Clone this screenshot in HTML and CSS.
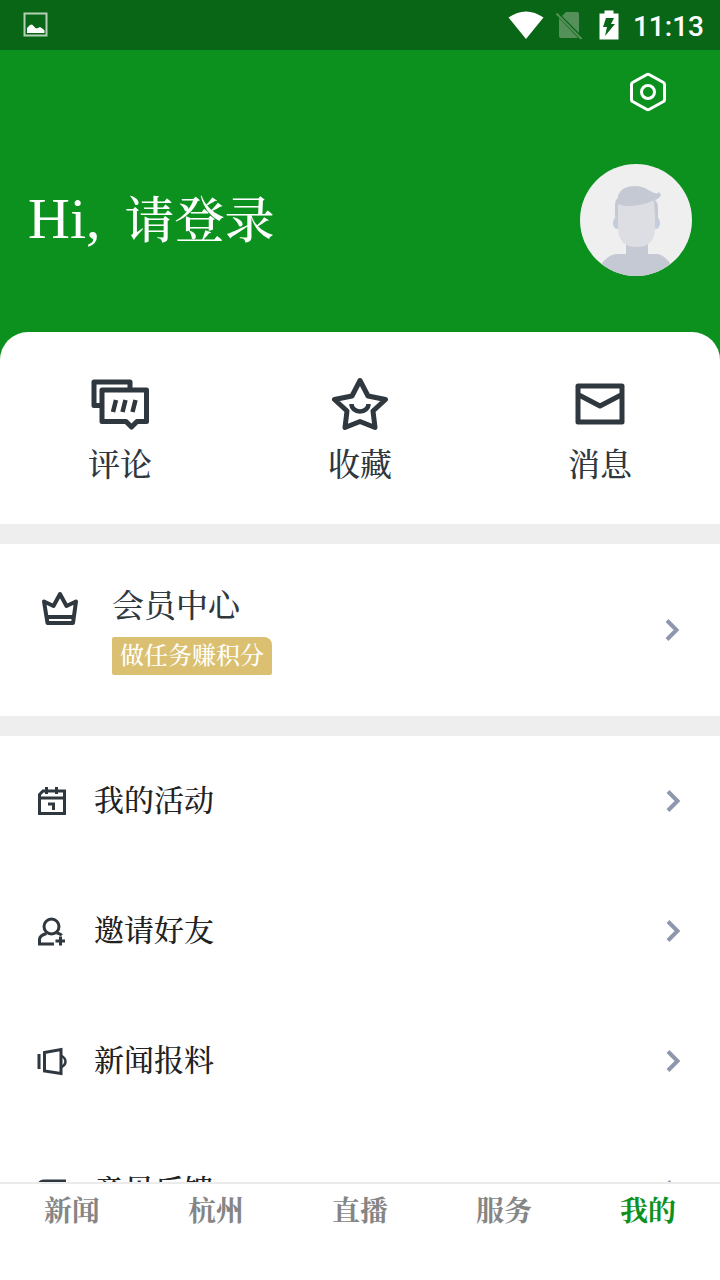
FILE: index.html
```html
<!DOCTYPE html>
<html lang="zh-CN">
<head>
<meta charset="utf-8">
<meta name="viewport" content="width=device-width, initial-scale=1">
<title>我的</title>
<link rel="stylesheet" href="styles.css">
</head>
<body>
<div class="app">
  <div class="status">
    <svg class="status-photo" width="26" height="26" viewBox="0 0 26 26" aria-hidden="true">
      <rect x="1.500" y="1.500" width="22" height="22" fill="none" stroke="#b5d0b6" stroke-width="2"/>
      <path d="M4 21v-5l3-3 2-.5 2 2 2 2 2-.5 2-1 3 2 1.500 1.500V21z" fill="#fff"/>
    </svg>
    <svg width="36" height="30" viewBox="0 0 36 30" aria-hidden="true">
      <path d="M.5 7.500Q18-4.500 35.500 7.500L18 29z" fill="#fff"/>
    </svg>
    <svg class="status-sim" width="28" height="30" viewBox="0 0 28 30" aria-hidden="true">
      <path d="M11 2h11q2 0 2 2v19L7 6zM4 8l19 20H6q-2 0-2-2z" fill="#55905a"/>
      <path d="M1.500 3.500l25 25.500" stroke="#55905a" stroke-width="2"/>
    </svg>
    <svg class="status-battery" width="20" height="30" viewBox="0 0 20 30" aria-hidden="true">
      <path d="M.5 3.500h5V.5h9v3h5v26H.5z" fill="#fff"/>
      <path d="M7 8h8l-3 6h4L6 26l2-9H4z" fill="#086616"/>
    </svg>
    <span class="clock">11:13</span>
  </div>

  <main class="content">
    <header class="hero">
      <div class="tools">
        <button class="settings" type="button" aria-label="设置">
          <svg width="40" height="40" viewBox="0 0 40 40" fill="none" stroke="#fff" stroke-width="3" stroke-linejoin="round">
            <path d="M19 2.500q1-.5 2 0l14.500 8q1 .5 1 2v15q0 1.500-1 2l-14.500 8q-1 .5-2 0l-14.500-8q-1-.5-1-2v-15q0-1.500 1-2z"/>
            <circle cx="20" cy="20" r="6.500"/>
          </svg>
        </button>
      </div>
      <div class="profile">
        <h1 class="greeting"><span class="hi">Hi,</span><span>请登录</span></h1>
        <svg class="avatar" viewBox="0 0 112 112" role="img" aria-label="头像">
          <defs><clipPath id="face"><circle cx="56" cy="56" r="56"/></clipPath></defs>
          <g clip-path="url(#face)">
            <rect width="112" height="112" fill="#efefef"/>
            <path d="M46 78h22v12h9q7 0 15 12v12H20v-12q8-12 17-12h9z" fill="#c5c9d4"/>
            <ellipse cx="37" cy="59" rx="4" ry="6" fill="#c5cddd"/>
            <ellipse cx="76" cy="59" rx="4" ry="6" fill="#c5cddd"/>
            <path d="M38 34q-3 1-3 8v11l3 2zM73 35q5 2 5 8v11l-4 1z" fill="#c5c9d4"/>
            <path d="M38 37h36l1 15v13q-1 18-18 18-18 0-19-18z" fill="#dcdee3"/>
            <path d="M38 40V32q3-10 17-10 8 0 15 5 4 2 7 2.500l2-1.500 2 3q-2 4-6 5-14 6-27 6-6 0-10-2z" fill="#c5c9d4"/>
          </g>
        </svg>
      </div>
    </header>

    <nav class="shortcuts" aria-label="快捷入口">
      <button class="shortcut" type="button">
        <svg width="60" height="60" viewBox="0 0 60 60" fill="none" stroke="#2f373f" stroke-width="5" stroke-linejoin="round" aria-hidden="true">
          <path d="M10 35.500H4V12h36v8"/>
          <path d="M12 20h44.500v31.500H47L41.500 57 36 51.500H12z" fill="#fff"/>
          <path d="M26 30l-3 12M35.500 30l-3 12M45.500 30l-3 12" stroke-width="4.500"/>
        </svg>
        <span>评论</span>
      </button>
      <button class="shortcut" type="button">
        <svg width="60" height="60" viewBox="0 0 60 60" fill="none" stroke="#2f373f" stroke-width="5" stroke-linejoin="round" aria-hidden="true">
          <path d="M30 10.500L38 26l17.500 3.500L43 41l2 16.500L30 51.500 15 57.500 17 41 4.500 29.500 22 26z"/>
          <path d="M21.500 34a8.500 7.500 0 0 0 17 0" stroke-width="4.500"/>
        </svg>
        <span>收藏</span>
      </button>
      <button class="shortcut" type="button">
        <svg width="60" height="60" viewBox="0 0 60 60" fill="none" stroke="#2f373f" stroke-width="5" stroke-linejoin="round" aria-hidden="true">
          <path d="M8 16h44v36H8zM8 24.500l22 11.500 22-11.500"/>
        </svg>
        <span>消息</span>
      </button>
    </nav>

    <a class="member" href="#member">
      <svg class="crown" width="40" height="40" viewBox="0 0 40 40" fill="none" stroke="#2f373f" stroke-width="4" stroke-linejoin="round" aria-hidden="true">
        <path d="M4 11.500l9.500 4.500L20 4l6.500 12 9.500-4.500L33 33H7.500z"/>
        <path d="M7 27h26"/>
      </svg>
      <span class="member-text">
        <span class="member-title">会员中心</span>
        <span class="tag">做任务赚积分</span>
      </span>
      <svg class="chevron" width="16" height="24" viewBox="0 0 16 24" aria-hidden="true"><path d="M3 2.500l9.500 9.500L3 21.500"/></svg>
    </a>

    <ul class="menu">
      <li><a class="row" href="#activity">
        <svg class="row-icon" width="32" height="32" viewBox="0 0 32 32" aria-hidden="true">
          <path d="M3.500 28.500V9.500L7 6h21.500v22.500zM3.500 13h25"/>
          <path d="M10.500 2v7M20.500 2v7M12 19h5.500v6"/>
        </svg>
        <span>我的活动</span>
        <svg class="chevron" width="16" height="24" viewBox="0 0 16 24" aria-hidden="true"><path d="M3 2.500l9.500 9.500L3 21.500"/></svg>
      </a></li>
      <li><a class="row" href="#invite">
        <svg class="row-icon" width="32" height="32" viewBox="0 0 32 32" aria-hidden="true">
          <circle cx="15.500" cy="11.500" r="7.500"/>
          <path d="M10.500 18.500q-7 2-7 6v4.500H18M20.500 18q4 .5 5 2.500M19.500 26H29M24.500 21.500v9"/>
        </svg>
        <span>邀请好友</span>
        <svg class="chevron" width="16" height="24" viewBox="0 0 16 24" aria-hidden="true"><path d="M3 2.500l9.500 9.500L3 21.500"/></svg>
      </a></li>
      <li><a class="row" href="#report">
        <svg class="row-icon" width="32" height="32" viewBox="0 0 32 32" aria-hidden="true">
          <path d="M3 9v15M8.500 7.500l16.500-3v24L8.500 26z"/>
          <path d="M25 10.500q4.500 2.500 4.500 6t-4.500 6" stroke-width="2.500"/>
        </svg>
        <span>新闻报料</span>
        <svg class="chevron" width="16" height="24" viewBox="0 0 16 24" aria-hidden="true"><path d="M3 2.500l9.500 9.500L3 21.500"/></svg>
      </a></li>
      <li><a class="row" href="#feedback">
        <svg class="row-icon" width="32" height="32" viewBox="0 0 32 32" aria-hidden="true">
          <path d="M3.500 27V9Q4 6 8 6h20.500v21z"/>
        </svg>
        <span>意见反馈</span>
        <svg class="chevron" width="16" height="24" viewBox="0 0 16 24" aria-hidden="true"><path d="M3 2.500l9.500 9.500L3 21.500"/></svg>
      </a></li>
    </ul>
  </main>

  <nav class="tabs" aria-label="主导航">
    <a class="tab" href="#news">新闻</a>
    <a class="tab" href="#hangzhou">杭州</a>
    <a class="tab" href="#live">直播</a>
    <a class="tab" href="#service">服务</a>
    <a class="tab tab-active" href="#me" aria-current="page">我的</a>
  </nav>
</div>
</body>
</html>
```
FILE: styles.css
```css
* {
  box-sizing: border-box;
}

body {
  margin: 0;
  background: #fff;
  color: #222;
  font-family: "Liberation Serif", "Noto Serif CJK SC", "Noto Sans CJK SC", serif;
  font-weight: 500;
}

a {
  color: inherit;
  text-decoration: none;
}

button {
  padding: 0;
  border: 0;
  background: none;
  color: inherit;
  font: inherit;
}

svg {
  display: block;
  flex: none;
}

.app {
  display: flex;
  flex-direction: column;
  height: 100vh;
}

.status {
  display: flex;
  flex: none;
  align-items: center;
  height: 50px;
  padding: 0 16px 0 23px;
  background: #086616;
}

.status-photo {
  margin-right: auto;
}

.status-sim {
  margin-left: 11px;
}

.status-battery {
  margin-left: 16px;
}

.clock {
  margin-left: 14px;
  padding-top: 4px;
  color: #fff;
  font: 500 28px/46px Roboto, sans-serif;
}

.content {
  flex: 1;
  min-height: 0;
  overflow: hidden;
}

.hero {
  padding: 0 28px 84px;
  background: #0d911e;
  color: #fff;
}

.tools {
  display: flex;
  justify-content: flex-end;
  padding: 22px 24px 0;
}

.profile {
  display: flex;
  align-items: center;
  justify-content: space-between;
  padding-top: 52px;
}

.greeting {
  display: flex;
  align-items: baseline;
  gap: 24px;
  margin: 0;
  font-size: 50px;
  font-weight: 500;
  line-height: 74px;
}

.hi {
  font-size: 58px;
}

.avatar {
  width: 112px;
  height: 112px;
}

.shortcuts {
  display: flex;
  margin-top: -28px;
  padding: 38px 0 35px;
  border-radius: 28px 28px 0 0;
  background: #fff;
  color: #2f373f;
}

.shortcut {
  display: flex;
  flex: 1;
  flex-direction: column;
  align-items: center;
  gap: 11px;
  font-size: 32px;
  line-height: 48px;
}

.member {
  display: flex;
  align-items: center;
  padding: 36px 40px;
  border-top: 20px solid #eee;
  border-bottom: 20px solid #eee;
  color: #2f373f;
}

.crown {
  align-self: flex-start;
  margin-top: 10px;
}

.member-text {
  display: flex;
  flex-direction: column;
  align-items: flex-start;
  gap: 5px;
  margin-left: 32px;
  padding-bottom: 5px;
}

.member-title {
  font-size: 32px;
  line-height: 52px;
}

.tag {
  padding: 0 8px;
  border-radius: 2px 8px 2px 2px;
  background: #dac070;
  color: #fff;
  font-size: 24px;
  line-height: 38px;
}

.chevron {
  margin-left: auto;
  fill: none;
  stroke: #8f97ae;
  stroke-width: 4px;
}

.menu {
  margin: 0;
  padding: 0;
  list-style: none;
}

.row {
  display: flex;
  align-items: center;
  height: 130px;
  padding: 0 39px 0 36px;
  font-size: 30px;
  line-height: 44px;
}

.row span {
  margin-left: 26px;
}

.row-icon {
  fill: none;
  stroke: #2f373f;
  stroke-width: 3px;
}

.tabs {
  display: flex;
  flex: none;
  height: 98px;
  border-top: 2px solid #ebebeb;
  background: #fff;
}

.tab {
  flex: 1;
  padding-top: 6px;
  color: #858585;
  font-size: 28px;
  font-weight: 700;
  line-height: 44px;
  text-align: center;
}

.tab-active {
  color: #0d911e;
}
```
